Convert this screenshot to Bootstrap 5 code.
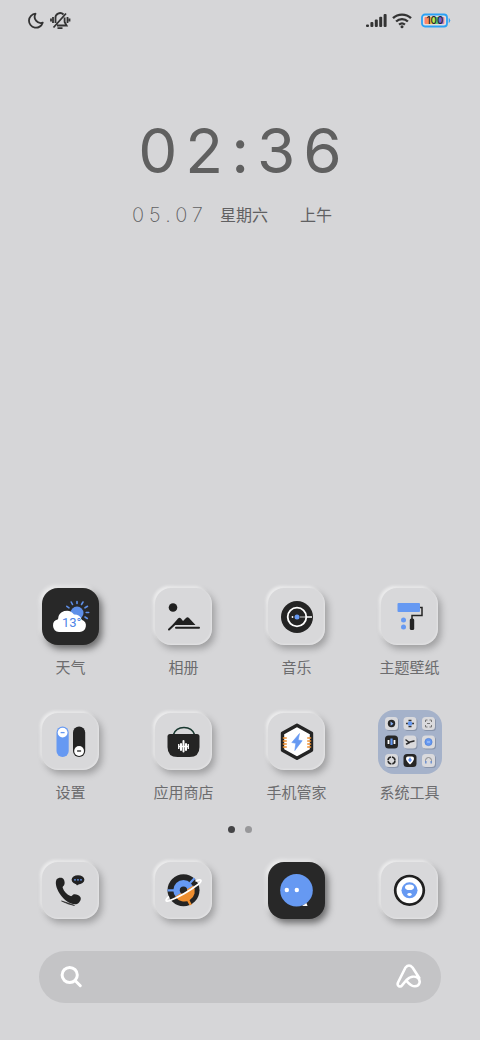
<!DOCTYPE html>
<html lang="zh-CN">
<head>
<meta charset="utf-8">
<meta name="viewport" content="width=device-width, initial-scale=1">
<title>主屏幕</title>
<link href="https://cdn.jsdelivr.net/npm/bootstrap@5.3.0/dist/css/bootstrap.min.css" rel="stylesheet">
<style>
  :root { --bg: #d6d6d8; }
  body { background: var(--bg); font-family: Inter, "Noto Sans CJK SC", sans-serif; color: #606062; }
  svg { display: block; flex-shrink: 0; }
  .status-bar { height: 40px; padding: 0 28px; }
  .clock { padding-top: 72px; }
  .clock-time { font-size: 62px; line-height: 78px; letter-spacing: 8px; padding-left: 8px; color: #606060; }
  .clock-date { font-size: 16px; line-height: 24px; margin-top: 13px; padding-right: 16px; }
  .clock-day { font-size: 20px; font-weight: 200; letter-spacing: 5px; margin-right: 12px; }
  .home-area { padding: 0 14px 37px; }
  .app-grid { row-gap: 35px; }
  .app-link { color: #6c6c6e; font-size: 15px; line-height: 20px; text-decoration: none; gap: 13px; }
  .tile-slot { width: 57px; height: 57px; }
  .tile { width: 57px; height: 57px; border-radius: 16px; background: #d8d8da;
    box-shadow: 3px 4px 7px rgba(0,0,0,.26), -2px -2px 3px rgba(255,255,255,.6), inset -1px -1px 2px rgba(255,255,255,.3); }
  .tile-dark { background: #282828; box-shadow: 3px 4px 7px rgba(0,0,0,.5), -2px -2px 4px rgba(255,255,255,.75); }
  .folder { width: 64px; height: 64px; border-radius: 16px; background: #a5b2ca; }
  .pager { gap: 10px; padding: 23px 0 29px; }
  .pager button { width: 7px; height: 7px; background: #98989a; }
  .pager .current { background: #444446; }
  .search-bar { height: 52px; margin: 32px 25px 0; padding: 0 19px; background: #c4c4c6; }
  .search-bar input { min-width: 0; color: #fff; outline: 0; }
</style>
</head>
<body>
<div class="min-vh-100 d-flex flex-column">
  <header class="status-bar d-flex align-items-center justify-content-between">
    <div class="d-flex align-items-center gap-1">
      <svg width="18" height="20" viewBox="0 0 18 20" fill="none" stroke="#333" stroke-width="1.8" stroke-linejoin="round"><path d="M7.500 3.700A7 7 0 1 0 14.700 12.700A6.200 6.200 0 0 1 7.500 3.700Z"/></svg>
      <svg width="22" height="20" viewBox="0 0 22 20" fill="none" stroke="#333" stroke-width="1.8"><path d="M5.500 13V8.500a4.700 4.700 0 0 1 8-4M14.600 7.500V12l2 3.500H7M3.500 17.500 16 3.500M7.500 18.200h5M3 7v6M1 8.500v3M17.500 7v6M19.500 8.500v3"/></svg>
    </div>
    <div class="d-flex align-items-center">
      <svg width="22" height="20" viewBox="0 0 22 20" fill="#333"><rect x="1" y="14.500" width="3" height="2.500" rx="1"/><rect x="5.400" y="12" width="3" height="5" rx="1"/><rect x="9.800" y="9.500" width="3" height="7.500" rx="1"/><rect x="14.200" y="6.800" width="3" height="10.200" rx="1"/><rect x="18.600" y="4" width="3" height="13" rx="1"/></svg>
      <svg class="ms-1" width="22" height="20" viewBox="0 0 22 20" fill="none" stroke="#333" stroke-width="2.400"><path d="M2 8.200a13 13 0 0 1 18 0M5.100 11.500a8.600 8.600 0 0 1 11.800 0M8.100 14.600a4.500 4.500 0 0 1 5.800 0"/><circle cx="11" cy="16.700" r="1.500" fill="#333" stroke="none"/></svg>
      <svg class="ms-2" width="31" height="20" viewBox="0 0 31 20"><defs><linearGradient id="bat"><stop offset="0" stop-color="#ff7774"/><stop offset=".25" stop-color="#f6a04c"/><stop offset=".4" stop-color="#e8ed43"/><stop offset=".6" stop-color="#55d86b"/><stop offset=".8" stop-color="#6857ed"/><stop offset="1" stop-color="#ff9390"/></linearGradient></defs><rect x="1" y="4.500" width="25" height="12" rx="3" fill="#e4dedb" stroke="#2ba1f5" stroke-width="1.800"/><rect x="3.500" y="7" width="20" height="7" rx="1" fill="url(#bat)"/><path d="M28 8.500q2 2 0 4z" fill="#2ba1f5" stroke="#2ba1f5" stroke-width=".6"/><text x="14" y="14" font-size="10" font-weight="500" text-anchor="middle" fill="#292936">100</text></svg>
    </div>
  </header>

  <section class="clock text-center">
    <div class="clock-time">02:36</div>
    <div class="clock-date d-flex justify-content-center align-items-center"><span class="clock-day">05.07</span><span>星期六</span><span class="ms-3 ps-3">上午</span></div>
  </section>

  <main class="home-area mt-auto">
    <nav class="app-grid row row-cols-4 gx-0" aria-label="应用">
      <a href="#" class="app-link col d-flex flex-column align-items-center">
        <span class="tile tile-dark"><svg width="57" height="57" viewBox="0 0 57 57"><g stroke="#5e8fe8" stroke-width="1.600" stroke-linecap="round"><path d="M35 15.500v-2M39.500 16.500l1.500-2.500M43 19.800l2.500-1.500M44.200 24.500h2.500M43 29l2.300 1.500M30.500 16.500 29.200 14M27 19.800l-2.200-1.500"/></g><circle cx="35" cy="25" r="6.500" fill="#5e8fe8"/><path d="M17 44a6.500 6.500 0 0 1-1-12.800 8.800 8.800 0 0 1 16-4.700 8 8 0 0 1 7.800 5.300A6.300 6.300 0 0 1 37.500 44Z" fill="#fff"/><text x="20" y="39" font-size="13" fill="#4e83e6" font-family="Roboto,sans-serif">13°</text></svg></span>
        <span>天气</span>
      </a>
      <a href="#" class="app-link col d-flex flex-column align-items-center">
        <span class="tile"><svg width="57" height="57" viewBox="0 0 57 57" fill="#202020"><circle cx="18" cy="19.500" r="4.300"/><path d="m17.500 37 5.500-6.500q1.500-1.500 3 0l2 2.500 3-3q1.500-1.500 3 0l6.500 7Z"/><path d="m14 41.500 8-7.500M21 39.800h23" fill="none" stroke="#202020" stroke-width="2" stroke-linecap="round"/></svg></span>
        <span>相册</span>
      </a>
      <a href="#" class="app-link col d-flex flex-column align-items-center">
        <span class="tile"><svg width="57" height="57" viewBox="0 0 57 57"><circle cx="29" cy="29" r="16" fill="#242424"/><circle cx="29" cy="29" r="9.300" fill="none" stroke="#fff" stroke-width="1.800"/><path d="M32 29h6" stroke="#777" stroke-width="2"/><path d="M37 29h7" stroke="#fff" stroke-width="1.500"/><circle cx="29" cy="29" r="2.500" fill="#6699f2"/><circle cx="24.500" cy="29" r=".9" fill="#fff"/></svg></span>
        <span>音乐</span>
      </a>
      <a href="#" class="app-link col d-flex flex-column align-items-center">
        <span class="tile"><svg width="57" height="57" viewBox="0 0 57 57"><rect x="16.500" y="15" width="22.500" height="9" rx="1" fill="#6699f2"/><path d="M39 19.500h2V27.500H31v5" fill="none" stroke="#242424" stroke-width="1.500"/><rect x="28.800" y="30.500" width="4.400" height="11.500" rx="1.500" fill="#242424"/><g fill="#6699f2"><circle cx="22.500" cy="32" r="2.500"/><circle cx="22.500" cy="39" r="2.500"/></g></svg></span>
        <span>主题壁纸</span>
      </a>
      <a href="#" class="app-link col d-flex flex-column align-items-center">
        <span class="tile"><svg width="57" height="57" viewBox="0 0 57 57"><rect x="14.500" y="13.500" width="12.200" height="30.500" rx="6.100" fill="#6699f2"/><rect x="31" y="13.500" width="12.200" height="30.500" rx="6.100" fill="#242424"/><g fill="#fff"><circle cx="20.600" cy="19.600" r="4.900"/><circle cx="37.100" cy="38" r="4.900"/></g><path d="M18.600 19.600h4" stroke="#6699f2" stroke-width="1.300"/><path d="M35.100 38h4" stroke="#242424" stroke-width="1.300"/></svg></span>
        <span>设置</span>
      </a>
      <a href="#" class="app-link col d-flex flex-column align-items-center">
        <span class="tile"><svg width="57" height="57" viewBox="0 0 57 57"><path d="M18.500 21.500c3-9.500 18-9.500 21 0" fill="none" stroke="#18382f" stroke-width="1.500"/><path d="M15 21h27q2.500 0 2.500 2.500V34q0 10-10 10h-12q-10 0-10-10V23.500Q12.500 21 15 21Z" fill="#242424"/><path d="M28.500 28v10.500M26 31v6M31 31v6" stroke="#fff" stroke-width="2" stroke-linecap="round"/><path d="M33.300 31v5M23.700 31v5M24 33.500h9" stroke="#fff" stroke-width="1.300"/></svg></span>
        <span>应用商店</span>
      </a>
      <a href="#" class="app-link col d-flex flex-column align-items-center">
        <span class="tile"><svg width="57" height="57" viewBox="0 0 57 57"><path d="m29 12.300 14.500 8v17L29 45.300l-14.500-8v-17Z" fill="#fff" stroke="#242424" stroke-width="3.400" stroke-linejoin="round"/><path d="M14.800 25h4M14.800 28h4M14.800 31h4M14.800 34h4M39.200 25h4M39.200 28h4M39.200 31h4M39.200 34h4" stroke="#ee8e2f" stroke-width="1.400"/><path d="m31.500 20.500-7.700 9 4 .8-1 7.200 7.400-9.800-4-.7Z" fill="#6699f2" stroke="#6699f2" stroke-width=".6"/></svg></span>
        <span>手机管家</span>
      </a>
      <a href="#" class="app-link col d-flex flex-column align-items-center">
        <span class="tile-slot d-flex align-items-center justify-content-center"><span class="folder flex-shrink-0"><svg width="64" height="64" viewBox="0 0 64 64">
          <g fill="#8995ab"><rect x="8" y="8" width="13" height="13" rx="3.500"/><rect x="26.500" y="8" width="13" height="13" rx="3.500"/><rect x="45" y="8" width="13" height="13" rx="3.500"/><rect x="26.500" y="26.500" width="13" height="13" rx="3.500"/><rect x="45" y="26.500" width="13" height="13" rx="3.500"/><rect x="8" y="45" width="13" height="13" rx="3.500"/><rect x="45" y="45" width="13" height="13" rx="3.500"/></g>
          <g fill="#dadadd"><rect x="7" y="7" width="13" height="13" rx="3.500"/><rect x="25.500" y="7" width="13" height="13" rx="3.500"/><rect x="44" y="7" width="13" height="13" rx="3.500"/><rect x="25.500" y="25.500" width="13" height="13" rx="3.500"/><rect x="44" y="25.500" width="13" height="13" rx="3.500"/><rect x="7" y="44" width="13" height="13" rx="3.500"/><rect x="44" y="44" width="13" height="13" rx="3.500"/></g>
          <g fill="#262626"><rect x="7" y="25.500" width="13" height="13" rx="3.500"/><rect x="25.500" y="44" width="13" height="13" rx="3.500"/><circle cx="13.500" cy="13.500" r="3.700"/></g>
          <path d="m12.500 11.500 3 2.200-2.800 2Z" fill="#8db3f5"/>
          <path d="M28 13.500h8M30.500 10.500h3M30.500 16.500h3" stroke="#333" stroke-width="1.400"/><circle cx="32" cy="13.500" r="2.200" fill="#6699f2"/>
          <path d="M47.500 12v-2h2M51.500 10h2v2M53.500 15v2h-2M49.500 17h-2v-2M49 13.500h3" fill="none" stroke="#777" stroke-width="1"/>
          <path d="M10.500 30v4M16.500 30v4" stroke="#fff" stroke-width="1.800"/><path d="M13.500 28.500v6.500" stroke="#6699f2" stroke-width="2.200"/>
          <path d="m28 30 3 2.300 5-1.300M28.500 34l3-1.500" fill="none" stroke="#292929" stroke-width="1.500" stroke-linecap="round"/>
          <circle cx="50.500" cy="32" r="3.600" fill="#6699f2" stroke="#4a7bd2" stroke-width=".7"/><path d="M49 32h3" stroke="#b7d0fb"/>
          <circle cx="13.500" cy="50.500" r="3.500" fill="none" stroke="#262626" stroke-width="1.600" stroke-dasharray="4.500 1"/>
          <path d="M28 48.500q0-2 2-2h4q2 0 2 2 0 2.500-4 6-4-3.500-4-6Z" fill="#fff"/><path d="M32 47.800v4.200M30.300 50h3.400" stroke="#5c8df1" stroke-width="1.500"/>
          <path d="M47.500 52v-1.500a3 3 0 0 1 6 0V52" fill="none" stroke="#888" stroke-width="1"/><path d="M47.800 51v2.500M53.200 51v2.500" stroke="#6f91cf" stroke-width="1.500"/>
        </svg></span></span>
        <span>系统工具</span>
      </a>
    </nav>

    <div class="pager d-flex justify-content-center">
      <button type="button" class="current border-0 p-0 rounded-circle" aria-label="第1页"></button>
      <button type="button" class="border-0 p-0 rounded-circle" aria-label="第2页"></button>
    </div>

    <nav class="row row-cols-4 gx-0" aria-label="常用">
      <a href="#" class="col d-flex justify-content-center" aria-label="电话"><span class="tile"><svg width="57" height="57" viewBox="0 0 57 57" fill="#222"><path d="M14.500 17.500c1.500-2 5.500-2.500 7-.5 1.200 1.600 1.700 5 .4 6.500-.7.900-1.500 1.200-1.200 2.300 1.200 3.700 4.300 7 7.800 8.300 1.200.4 1.500-.7 2.500-1.300 2-1.200 5.800.3 7.300 2.200 1.400 2-.5 5.500-2.800 6.800-5 2-12-2.300-16.500-8.300-3.800-5-6.500-12-4.500-16Z"/><ellipse cx="36" cy="17.800" rx="6.400" ry="4.600"/><path d="m33 20.500 2 3 3-2.500Z"/><path d="M19.500 39q6 1.500 13 4.500-6-.8-13-4.500Z" stroke="#222" stroke-width=".6"/><g fill="#6699f2"><circle cx="33" cy="17.800" r=".9"/><circle cx="36" cy="17.800" r=".9"/><circle cx="39" cy="17.800" r=".9"/></g></svg></span></a>
      <a href="#" class="col d-flex justify-content-center" aria-label="浏览器"><span class="tile"><svg width="57" height="57" viewBox="0 0 57 57"><circle cx="28.500" cy="28.300" r="16" fill="#242424"/><circle cx="28.500" cy="28.300" r="10.200" fill="#6699f2"/><path d="M38.300 23.500a10.500 10.500 0 0 1-18 11Z" fill="#ee8e2f"/><path d="M12.500 28.300h7M35 21l4.500-4.700" stroke="#6699f2" stroke-width="2.200"/><path d="m32.500 37 3.200 6" stroke="#ee8e2f" stroke-width="2.500"/><circle cx="28.500" cy="28.300" r="3.700" fill="#242424"/><path d="M14 34.500c-4 3.500-4 6 1 4 10-4 20-10 28-16 5-4 3.500-6-2.500-3.300" fill="none" stroke="#fff" stroke-width="1.700"/></svg></span></a>
      <a href="#" class="col d-flex justify-content-center" aria-label="短信"><span class="tile tile-dark"><svg width="57" height="57" viewBox="0 0 57 57"><circle cx="28.500" cy="28.300" r="16.300" fill="#6699f2"/><path d="M34 43.900h5.500l-1-2.800Z" fill="#fff"/><g fill="#fff"><circle cx="18.800" cy="28" r="2.200"/><circle cx="28.800" cy="28" r="2.200"/></g></svg></span></a>
      <a href="#" class="col d-flex justify-content-center" aria-label="相机"><span class="tile"><svg width="57" height="57" viewBox="0 0 57 57"><circle cx="28.500" cy="28.300" r="14.300" fill="#fff" stroke="#202020" stroke-width="2.700"/><circle cx="28.500" cy="28.300" r="8" fill="#6699f2"/><g fill="#fff"><ellipse cx="28.500" cy="25.300" rx="4.500" ry="2.800"/><ellipse cx="28.500" cy="32.500" rx="2.200" ry="1.400"/></g></svg></span></a>
    </nav>

    <form class="search-bar d-flex align-items-center rounded-pill" role="search">
      <svg width="26" height="26" viewBox="0 0 26 26" fill="none" stroke="#fff" stroke-width="3" stroke-linecap="round"><circle cx="11.700" cy="11" r="7.600"/><path d="m17.300 16.700 5 5"/></svg>
      <input type="search" class="flex-grow-1 border-0 bg-transparent mx-2" aria-label="搜索">
      <button type="button" class="border-0 bg-transparent p-0" aria-label="助手"><svg width="26" height="26" viewBox="0 0 26 26" fill="none" stroke="#fff" stroke-width="2.600" stroke-linecap="round" stroke-linejoin="round"><path d="M23.300 14 16.500 3.500q-3.500-4-7 0L2 18.500c-1.500 4 2.500 5 4.200 2.700L10.500 16c3.500-3.500 8-4 11-2.500 4 3.500 2 8.500-2.500 8.800-3.500.2-5.500-2.300-8-4.800"/></svg></button>
    </form>
  </main>
</div>
<script src="https://cdn.jsdelivr.net/npm/bootstrap@5.3.0/dist/js/bootstrap.bundle.min.js"></script>
</body>
</html>
